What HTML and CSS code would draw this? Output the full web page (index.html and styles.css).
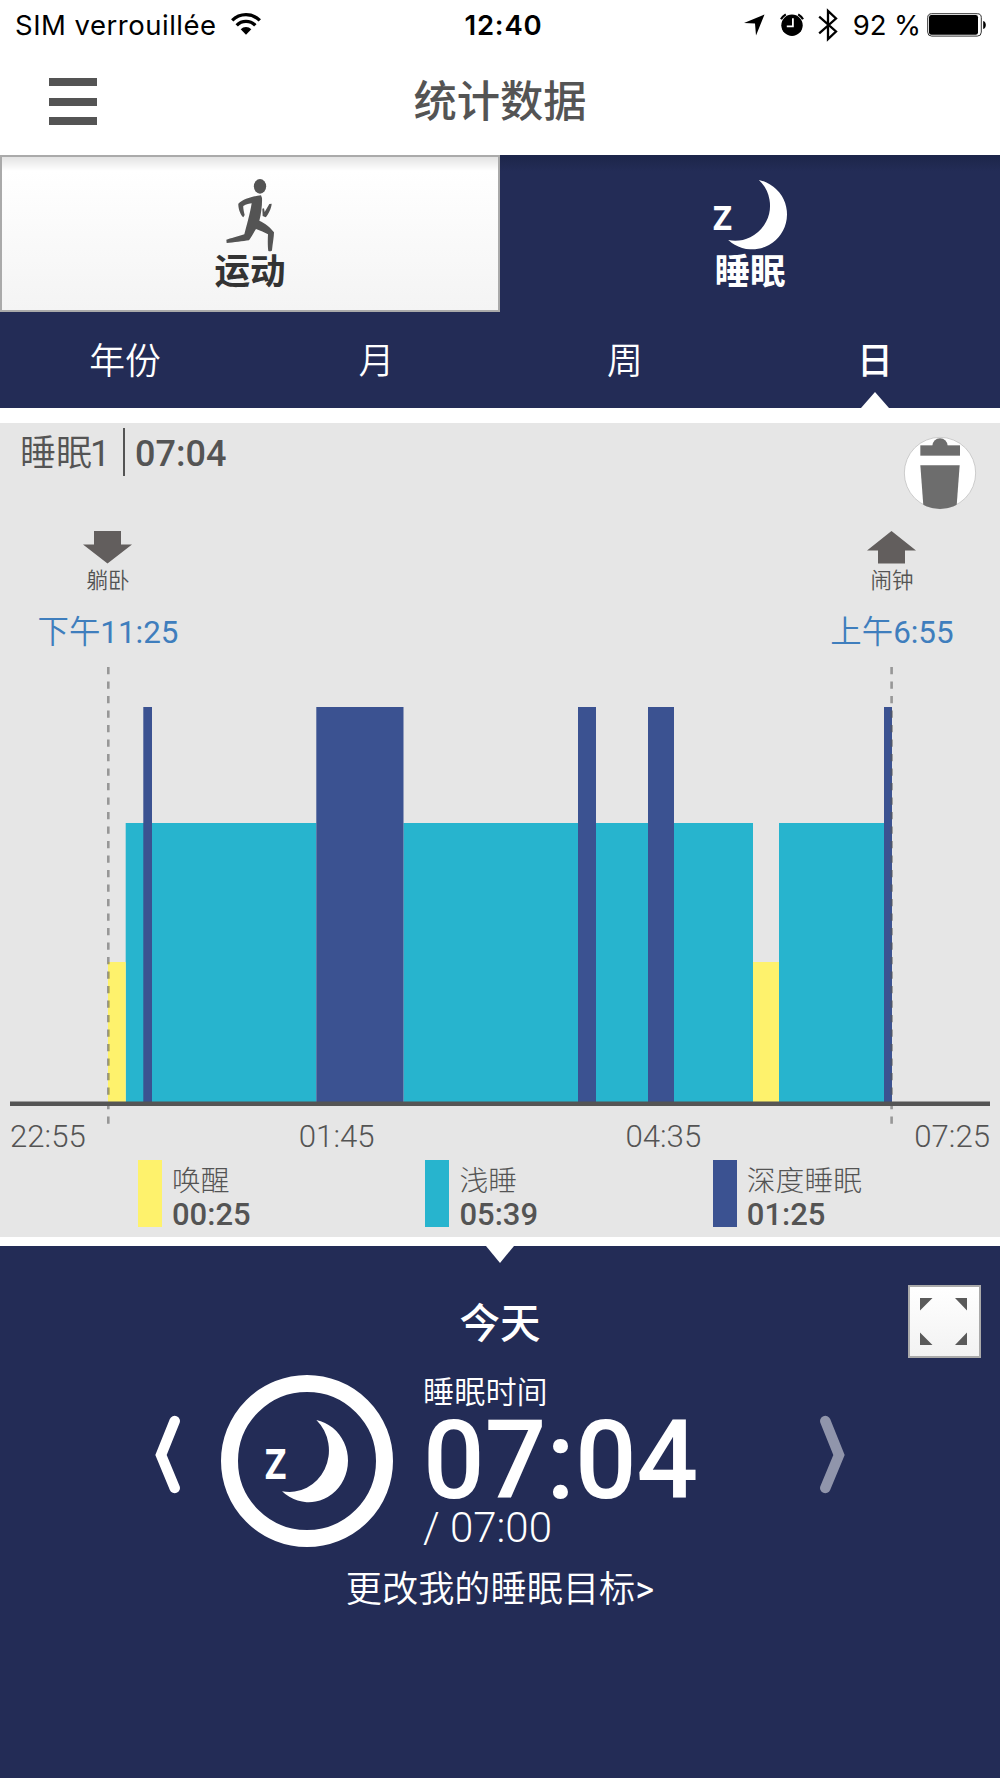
FILE: index.html
```html
<!DOCTYPE html>
<html lang="zh-CN">
<head>
<meta charset="utf-8">
<title>统计数据</title>
<link rel="stylesheet" href="styles.css">
</head>
<body>
<div class="status">
  <div class="status-left">
    <span class="carrier">SIM verrouillée</span>
    <svg class="wifi" width="30" height="22" viewBox="0 0 30 22"><g fill="none" stroke="#000" stroke-width="3.3"><path d="M1.2 7.4A19.6 19.6 0 0 1 28.8 7.4"/><path d="M5.7 12.3A13 13 0 0 1 24.3 12.3"/></g><path d="M9.7 16.3A7.3 7.3 0 0 1 20.3 16.3L15 21.8Z"/></svg>
  </div>
  <span class="clock">12:40</span>
  <div class="status-right">
    <svg class="loc" width="21" height="22" viewBox="0 0 21 22"><path d="M20.5 0.5L12 21.5L11 9.5L0 9Z"/></svg>
    <svg class="alarm" width="24" height="24" viewBox="0 0 24 24"><circle cx="12" cy="12.3" r="10.7"/><path d="M1 6.2A14 14 0 0 1 5.8 1.4M23 6.2A14 14 0 0 0 18.2 1.4" fill="none" stroke="#000" stroke-width="2.2"/><path d="M12.9 5.3V13.4H6.8" fill="none" stroke="#fff" stroke-width="1.8"/></svg>
    <svg class="bt" width="20" height="34" viewBox="0 0 20 34"><path d="M1.2 8.7L18 23.5L10 31V3L18 10.5L1.2 25.3" fill="none" stroke="#000" stroke-width="2.3"/></svg>
    <span class="percent">92 %</span>
    <svg class="battery" width="60" height="24" viewBox="0 0 60 24"><rect x=".7" y=".7" width="53.6" height="22.4" rx="4" fill="#fff" stroke="#333" stroke-width="1"/><rect x="2" y="2" width="49" height="19.8" rx="2.3"/><path d="M56.2 8C59.7 8.700 59.700 15.300 56.200 16Z"/></svg>
  </div>
</div>

<header class="header">
  <div class="burger"><i></i><i></i><i></i></div>
  <h1>统计数据</h1>
</header>

<nav class="tabs">
  <div class="tab tab-sport">
    <svg width="52" height="75" viewBox="75 80 156 225" fill="#545454">
      <ellipse cx="180" cy="108" rx="18.500" ry="22"/>
      <path d="M183 135C160 137 130 145 115 160C114 175 122 195 130 201L134 194C131 183 129 170 130 167C138 162 150 159 155 159C150 190 140 225 133 252C115 257 90 265 79 268L80 278C100 277 130 272 147 270C155 260 162 245 168 236C180 241 195 246 204 252C203 270 203 290 205 302C210 304 215 303 216 300C218 280 222 260 222 246C212 232 195 218 178 211C184 190 187 160 186 143Z"/>
      <path d="M208 161L215 160C214 175 205 192 197 201L188 197L187 175L192 174L194 185Z"/>
    </svg>
    <span>运动</span>
  </div>
  <div class="tab tab-sleep">
    <svg width="74" height="70" viewBox="0 0 74 70">
      <path fill="#fff" d="M45.8 0A35 35 0 1 1 15.2 60A35 35 0 0 0 45.8 0Z"/>
      <text class="moon-z" x="0" y="49.7" textLength="19" lengthAdjust="spacingAndGlyphs">Z</text>
    </svg>
    <span>睡眠</span>
  </div>
</nav>

<nav class="periods">
  <span>年份</span><span class="month">月</span><span>周</span><span class="active">日</span>
</nav>

<main class="panel">
  <div class="session">
    <span class="session-name">睡眠<span class="num">1</span></span>
    <span class="session-time">07:04</span>
    <svg class="trash" width="74" height="74" viewBox="368 79 222 222">
      <clipPath id="disc"><circle cx="479" cy="190" r="108"/></clipPath>
      <circle cx="479" cy="190" r="107" fill="#fff" stroke="#c4c4c4" stroke-width="2.500"/>
      <g fill="#6d6d6d" clip-path="url(#disc)"><circle cx="479" cy="109" r="23"/><rect x="420" y="107" width="119" height="31"/><path d="M420 167H538L528 301H430Z"/></g>
    </svg>
  </div>
  <div class="marks">
    <div class="mark mark-start">
      <svg width="49" height="33" viewBox="0 0 49 33"><path fill="#625e5d" d="M11 0H38V13.500H49L24.500 32.500L0 13.500H11Z"/></svg>
      <small>躺卧</small>
      <b>下午<span class="num">11:25</span></b>
    </div>
    <div class="mark mark-end">
      <svg width="49" height="33" viewBox="0 0 49 33"><path fill="#625e5d" d="M11 32.500H38V19.500H49L24.500 0L0 19.500H11Z"/></svg>
      <small>闹钟</small>
      <b>上午<span class="num">6:55</span></b>
    </div>
  </div>
  <svg class="chart" width="1000" height="457" viewBox="0 667 1000 457">
    <g fill="#27b4ce">
      <rect x="125.700" y="823" width="190.600" height="279"/>
      <rect x="403.500" y="823" width="349.500" height="279"/>
      <rect x="779" y="823" width="105" height="279"/>
    </g>
    <g fill="#fef26c">
      <rect x="108" y="962" width="17.700" height="140"/>
      <rect x="753" y="962" width="26" height="140"/>
    </g>
    <g fill="#3b5291">
      <rect x="143.300" y="707" width="8.700" height="395"/>
      <rect x="316.300" y="707" width="87.200" height="395"/>
      <rect x="578" y="707" width="18" height="395"/>
      <rect x="648" y="707" width="26" height="395"/>
      <rect x="884" y="707" width="8" height="395"/>
    </g>
    <path d="M108.300 667V1124M891.600 667V1124" stroke="#555" stroke-opacity=".55" stroke-width="2.600" stroke-dasharray="7.250 7.250"/>
    <path d="M10 1103.700H990" stroke="#555" stroke-width="4.600"/>
  </svg>
  <div class="axis"><span>22:55</span><span>01:45</span><span>04:35</span><span>07:25</span></div>
  <div class="legend">
    <div class="item"><i class="swatch awake"></i><div><span>唤醒</span><b>00:25</b></div></div>
    <div class="item"><i class="swatch light"></i><div><span>浅睡</span><b>05:39</b></div></div>
    <div class="item"><i class="swatch deep"></i><div><span>深度睡眠</span><b>01:25</b></div></div>
  </div>
</main>

<section class="summary">
  <h2>今天</h2>
  <svg class="expand" width="73" height="73" viewBox="0 0 73 73">
    <defs><linearGradient id="btn" x2="0" y2="1"><stop stop-color="#fff"/><stop offset="1" stop-color="#f2f2f2"/></linearGradient></defs>
    <rect x="1" y="1" width="71" height="71" fill="url(#btn)" stroke="#aaa" stroke-width="2"/>
    <path fill="#5a5a5a" d="M12 13H24.500L12 25.500ZM47 13H59V25.500ZM12 47.500L24.500 60H12ZM59 47.500V60H47Z"/>
  </svg>
  <div class="goal">
    <svg class="chev" width="26" height="79" viewBox="0 0 26 79"><path d="M19.700 6L6 40L19.700 73" fill="none" stroke="#fff" stroke-width="10.500" stroke-linecap="round"/></svg>
    <div class="ring">
      <svg width="83" height="83" viewBox="0 0 74 70" preserveAspectRatio="none">
        <path fill="#fff" d="M45.8 0A35 35 0 1 1 15.2 60A35 35 0 0 0 45.8 0Z"/>
        <text class="moon-z" x="0" y="49.7" textLength="19" lengthAdjust="spacingAndGlyphs">Z</text>
      </svg>
    </div>
    <div class="figures">
      <span class="caption">睡眠时间</span>
      <strong>07:04</strong>
      <span class="target">/ 07:00</span>
    </div>
    <svg class="chev next" width="26" height="79" viewBox="0 0 26 79"><path d="M6.300 6L20 40L6.300 73" fill="none" stroke="#9095ab" stroke-width="10.500" stroke-linecap="round"/></svg>
  </div>
  <a class="change">更改我的睡眠目标<span class="num">&gt;</span></a>
</section>
</body>
</html>
```
FILE: styles.css
```css
* { box-sizing: border-box; }
body {
  margin: 0;
  width: 1000px;
  height: 1778px;
  overflow: hidden;
  display: flex;
  flex-direction: column;
  background: #fff;
  color: #545454;
  font-family: Roboto, "Noto Sans CJK SC", sans-serif;
}
svg { display: block; flex: none; }
.num { font-weight: 400; }
.moon-z { font: 700 34px "Noto Sans", sans-serif; fill: #fff; }

.status {
  height: 50px;
  display: grid;
  grid-template-columns: 1fr auto 1fr;
  align-items: center;
  padding: 0 13px 0 15px;
  color: #000;
  font: 400 27.5px/50px Inter, sans-serif;
}
.status-left, .status-right { display: flex; align-items: center; height: 50px; }
.status-right { justify-content: flex-end; }
.carrier { letter-spacing: .5px; }
.wifi { margin-left: 14px; margin-top: -2px; }
.clock { font-weight: 600; letter-spacing: .8px; padding-left: 5px; }
.alarm { margin-left: 15px; }
.bt { margin-left: 14px; }
.percent { margin-left: 15px; letter-spacing: -.1px; }
.battery { margin-left: 6px; }

.header {
  height: 105px;
  display: grid;
  grid-template-columns: 1fr auto 1fr;
  align-items: center;
  padding: 0 49px;
}
.burger { display: grid; gap: 11.5px; width: 48px; margin-top: -2px; }
.burger i { height: 8px; background: #545454; }
h1 { margin: 0; font-size: 43.3px; font-weight: 500; line-height: 60px; }

.tabs { height: 157px; display: flex; background: linear-gradient(#1c2549, #232c56 16px); }
.tab {
  width: 500px;
  display: flex;
  flex-direction: column;
  align-items: center;
  font-size: 35.6px;
  font-weight: 700;
  line-height: 40px;
}
.tab-sport {
  padding-top: 20px;
  color: #333;
  border: 2px solid #aaa;
  background: linear-gradient(#e3e3e3, #fff 14px, #f4f4f4);
}
.tab-sport svg { margin-left: 1px; }
.tab-sleep { padding-top: 25px; color: #fff; }
.tab-sleep svg { margin-right: 1px; }
.tab-sleep span { margin-top: 2px; }

.periods {
  height: 96px;
  display: grid;
  grid-template-columns: repeat(4, 1fr);
  background: #232c56;
  color: #fff;
  font-size: 35.8px;
  font-weight: 350;
  line-height: 101px;
  text-align: center;
}
.month { padding-left: 3px; }
.periods .active { position: relative; height: 96px; font-weight: 500; }
.active::after {
  content: "";
  position: absolute;
  left: 111px;
  bottom: 0;
  border: solid transparent;
  border-width: 0 14px 16px;
  border-bottom-color: #fff;
}

.panel {
  height: 814px;
  margin: 15px 0 9px;
  background: #e6e6e6;
}
.session { height: 108px; display: flex; padding: 5px 23px 0 20px; font-size: 36px; line-height: 52px; }
.session-name { font-weight: 350; height: 48px; width: 105px; border-right: 2.500px solid #545454; white-space: nowrap; }
.session-name .num { margin-left: -2px; }
.session-time { font-weight: 500; padding-left: 10px; }
.trash { margin: 8px 0 0 auto; }
.marks { height: 136px; display: flex; justify-content: space-between; padding: 0 8px; }
.mark { width: 200px; display: flex; flex-direction: column; align-items: center; }
.mark svg { margin-right: 2px; }
.mark small { font-size: 21.5px; font-weight: 350; line-height: 30px; margin-top: 2px; }
.mark b { color: #3f7ebd; font-size: 31.4px; font-weight: 350; line-height: 40px; margin-top: 17px; }
.axis {
  display: grid;
  grid-template-columns: 1fr 2fr 2fr 1fr;
  padding: 0 10px;
  font-size: 31.2px;
  font-weight: 300;
  line-height: 26px;
  text-align: center;
}
.axis span:first-child { text-align: left; }
.axis span:last-child { text-align: right; }
.legend { display: grid; grid-template-columns: repeat(3, 287.400px); padding: 10px 0 0 138px; }
.item { display: flex; gap: 10px; }
.swatch { width: 24px; height: 67px; }
.awake { background: #fef26c; }
.light { background: #27b4ce; }
.deep { background: #3b5291; }
.item span { display: block; font-size: 28.8px; font-weight: 300; line-height: 42px; }
.item b { display: block; font-size: 31px; font-weight: 500; line-height: 26px; }

.summary { position: relative; flex: 1; background: #232c56; color: #fff; }
.summary::before {
  content: "";
  position: absolute;
  left: 486px;
  top: 0;
  border: solid transparent;
  border-width: 17px 14px 0;
  border-top-color: #fff;
}
h2 { margin: 0; padding-top: 48px; font-size: 40.5px; font-weight: 500; line-height: 60px; text-align: center; }
.expand { position: absolute; left: 908px; top: 39px; }
.goal { display: flex; height: 200px; margin-top: 14px; padding-left: 155px; }
.chev { margin-top: 47px; }
.ring { width: 172px; height: 172px; margin: 7px 0 0 40px; border: 17px solid #fff; border-radius: 50%; padding: 28px 0 0 27px; }
.figures { width: 389px; margin-left: 30px; display: flex; flex-direction: column; }
.caption { font-size: 31.2px; font-weight: 350; line-height: 50px; }
strong { margin-top: -2px; font-size: 108.5px; font-weight: 500; line-height: 90px; }
.target { font-size: 42px; font-weight: 300; line-height: 44px; }
.next { margin-left: 7px; }
.change { display: block; margin-top: -8px; font-size: 36.2px; font-weight: 350; line-height: 60px; text-align: center; }
```
